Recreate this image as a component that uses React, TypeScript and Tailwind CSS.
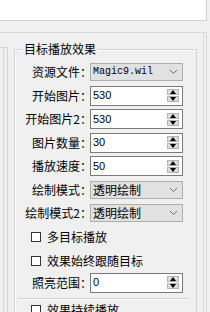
import React from 'react';

const cjk = '"Noto Sans CJK SC", "Noto Sans", sans-serif';

function Label({ text }: { text: string }) {
  return (
    <div className="w-[77px] shrink-0 whitespace-nowrap text-right text-[12px] leading-[14px] text-black">
      {text}
    </div>
  );
}

function Chevron() {
  return (
    <svg width="9" height="6" viewBox="0 0 9 6" className="shrink-0">
      <path d="M1 1 L4.5 4.5 L8 1" fill="none" stroke="#6b6b6b" strokeWidth="1" />
    </svg>
  );
}

function SelectRow({ label, value, mono, h }: { label: string; value: string; mono?: boolean; h: string }) {
  return (
    <div className={`flex items-center ${h}`}>
      <Label text={label} />
      <div className="-ml-[2px] flex h-[18px] w-[93px] items-center justify-between border border-[#adadad] bg-[#e1e1e1] pl-[2px] pr-[4px]">
        <span
          className={mono ? 'text-[10px] leading-[12px] text-black' : 'text-[12px] leading-[14px] text-black'}
          style={mono ? { fontFamily: '"Liberation Mono", monospace' } : undefined}
        >
          {value}
        </span>
        <Chevron />
      </div>
    </div>
  );
}

function SpinButtons() {
  return (
    <div className="flex w-[12px] shrink-0 flex-col gap-[1px]">
      <div className="flex h-[6px] items-center justify-center border border-[#b5b5b5] bg-[#dcdcdc]">
        <svg width="6" height="4" viewBox="0 0 6 4">
          <path d="M0 4 L3 0 L6 4 Z" fill="#000" />
        </svg>
      </div>
      <div className="flex h-[6px] items-center justify-center border border-[#b5b5b5] bg-[#dcdcdc]">
        <svg width="6" height="4" viewBox="0 0 6 4">
          <path d="M0 0 L3 4 L6 0 Z" fill="#000" />
        </svg>
      </div>
    </div>
  );
}

function SpinRow({ label, value, h }: { label: string; value: string; h: string }) {
  return (
    <div className={`flex items-center ${h}`}>
      <Label text={label} />
      <div className="-ml-[2px] flex h-[20px] w-[93px] items-center justify-between border border-[#7a7a7a] bg-white pl-[2px] pr-[3px]">
        <span className="text-[11px] leading-[13px] text-black" style={{ fontFamily: '"Liberation Sans", Arial, sans-serif' }}>
          {value}
        </span>
        <SpinButtons />
      </div>
    </div>
  );
}

function CheckRow({ label, h }: { label: string; h: string }) {
  return (
    <div className={`flex items-center pl-[16px] ${h}`}>
      <div className="h-[10px] w-[10px] shrink-0 border border-[#333] bg-white" />
      <span className="ml-[6px] whitespace-nowrap text-[12px] leading-[14px] text-black">{label}</span>
    </div>
  );
}

export default function App() {
  return (
    <div className="h-[312px] w-[210px] overflow-hidden bg-[#f0f0f0]" style={{ fontFamily: cjk }}>
      {/* top box */}
      <div className="h-[21px] w-[207px] border-b border-r border-[#d2d2d2] bg-white" />

      {/* outer panel */}
      <div className="mt-[11px] flex h-[300px] w-[207px] border-t border-r border-[#d9d9d9]">
        <div className="flex flex-1 border-r border-[#dcdcdc] mr-[2px]">
          {/* left strip */}
          <div className="mt-[14px] w-[8px] border-t border-r border-[#d6d6d6]">
            <div className="h-full w-[4px] border-r border-[#d6d6d6]" />
          </div>

          {/* group box */}
          <div className="relative ml-[6px] mt-[16px] w-[183px] border border-b-0 border-[#d3d3d3] shadow-[inset_1px_1px_0_#ffffff]">
            <span className="absolute -top-[8px] left-[8px] bg-[#f0f0f0] px-[1px] text-[12px] leading-[14px] text-black">
              目标播放效果
            </span>
            <div className="pt-[10px]">
              <SelectRow label="资源文件：" value="Magic9.wil" mono h="h-[24px]" />
              <SpinRow label="开始图片：" value="530" h="h-[23px]" />
              <SpinRow label="开始图片2：" value="530" h="h-[24px]" />
              <SpinRow label="图片数量：" value="30" h="h-[23px]" />
              <SpinRow label="播放速度：" value="50" h="h-[24px]" />
              <SelectRow label="绘制模式：" value="透明绘制" h="h-[23px]" />
              <SelectRow label="绘制模式2：" value="透明绘制" h="h-[24px]" />
              <CheckRow label="多目标播放" h="h-[24px]" />
              <CheckRow label="效果始终跟随目标" h="h-[23px]" />
              <SpinRow label="照亮范围：" value="0" h="h-[21px]" />
              <div className="ml-[3px] mt-[5px] w-[171px] border-t border-[#cfcfcf] border-b border-b-white" />
              <CheckRow label="效果持续播放" h="h-[20px]" />
            </div>
          </div>
        </div>
      </div>
    </div>
  );
}
